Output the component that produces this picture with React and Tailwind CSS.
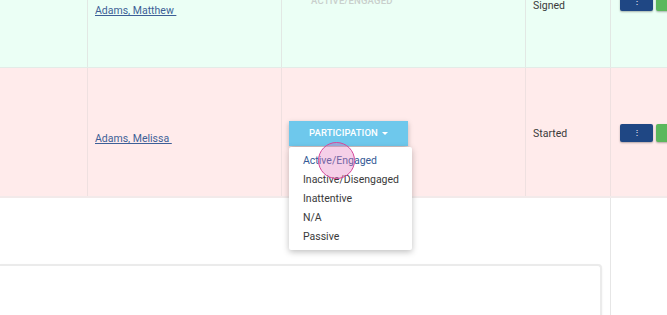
import React from 'react';

const font = { fontFamily: 'Roboto, "Liberation Sans", sans-serif' };

function ActionButtons({ className = '' }) {
  return (
    <div className={`flex gap-[3px] ${className}`}>
      <button className="flex h-[18px] w-[33px] shrink-0 items-center justify-center rounded-[2px] bg-[#1f4784] text-[8px] leading-none text-white shadow-[0_1px_2px_rgba(0,0,0,0.3)]">
        ⋮
      </button>
      <button className="h-[18px] w-[33px] shrink-0 rounded-[2px] bg-[#5cb85c] shadow-[0_1px_2px_rgba(0,0,0,0.3)]" />
    </div>
  );
}

export default function App() {
  const options = ['Active/Engaged', 'Inactive/Disengaged', 'Inattentive', 'N/A', 'Passive'];

  return (
    <div className="relative h-[315px] w-[667px] overflow-hidden bg-white text-[10.5px] text-[#3a3a3a]" style={font}>
      {/* row 1 */}
      <div className="flex h-[68px] border-b border-[#e3ece7] bg-[#ebfff5]">
        <div className="w-[88px] shrink-0 border-r border-[#e2e8e4]" />
        <div className="w-[194px] shrink-0 border-r border-[#e2e8e4] pl-[7px] pt-[3px]">
          <a className="text-[#3d5f97] underline decoration-[#3d5f97]">Adams, Matthew&nbsp;</a>
        </div>
        <div className="w-[244px] shrink-0 border-r border-[#e2e8e4] pl-[29px]">
          <div className="-mt-[6px] text-[9.5px] font-medium uppercase tracking-[0.2px] text-[#c9cfcc]">Active/Engaged</div>
        </div>
        <div className="w-[85px] shrink-0 border-r border-[#e2e8e4] pl-[7px]">
          <div className="-mt-[2px]">Signed</div>
        </div>
        <div className="min-w-0 flex-1 pl-[9px]">
          <ActionButtons className="-mt-[7px]" />
        </div>
      </div>

      {/* row 2 */}
      <div className="flex h-[130px] border-b-2 border-[#f2eaea] bg-[#ffebeb]">
        <div className="w-[88px] shrink-0 border-r border-[#efe0e0]" />
        <div className="flex w-[194px] shrink-0 items-center border-r border-[#efe0e0] pl-[7px] pt-[14px]">
          <a className="text-[#3d5f97] underline decoration-[#3d5f97]">Adams, Melissa&nbsp;</a>
        </div>
        <div className="w-[244px] shrink-0 border-r border-[#efe0e0]" />
        <div className="flex w-[85px] shrink-0 items-center border-r border-[#efe0e0] pl-[7px] pt-[3px]">
          Started
        </div>
        <div className="min-w-0 flex-1 pl-[9px] pt-[56px]">
          <ActionButtons />
        </div>
      </div>

      {/* lower area */}
      <div className="flex h-[117px]">
        <div className="w-[611px] shrink-0 border-r border-[#e6e6e6] pr-[8px] pt-[66px]">
          <div className="h-[60px] rounded-tr-[4px] border-r-2 border-t-2 border-[#ebebeb] bg-white shadow-[0_1px_2px_rgba(0,0,0,0.08)]" />
        </div>
        <div className="flex-1" />
      </div>

      {/* dropdown */}
      <div className="absolute left-[289px] top-[121px] w-[123px]">
        <button className="flex h-[25px] w-[119px] items-center justify-center bg-[#6ec8ec] text-[9.5px] font-medium tracking-[0.1px] text-white shadow-[0_2px_5px_rgba(0,0,0,0.25)]">
          PARTICIPATION
          <span className="ml-[4px] inline-block h-0 w-0 border-x-[3px] border-t-[3px] border-x-transparent border-t-white" />
        </button>
        <ul className="mt-[1px] rounded-[2px] bg-white py-[4px] shadow-[0_2px_6px_rgba(0,0,0,0.25)]">
          {options.map((o, i) => (
            <li
              key={o}
              className={`h-[19px] pl-[14px] leading-[19px] ${i === 0 ? 'text-[#345a96]' : 'text-[#3a3a3a]'}`}
            >
              {o}
            </li>
          ))}
        </ul>
      </div>

      {/* touch indicator */}
      <div className="absolute left-[318px] top-[142px] h-[37px] w-[37px] rounded-full border-[1.5px] border-[#d6479a] bg-[rgba(226,120,190,0.35)]" />
    </div>
  );
}
